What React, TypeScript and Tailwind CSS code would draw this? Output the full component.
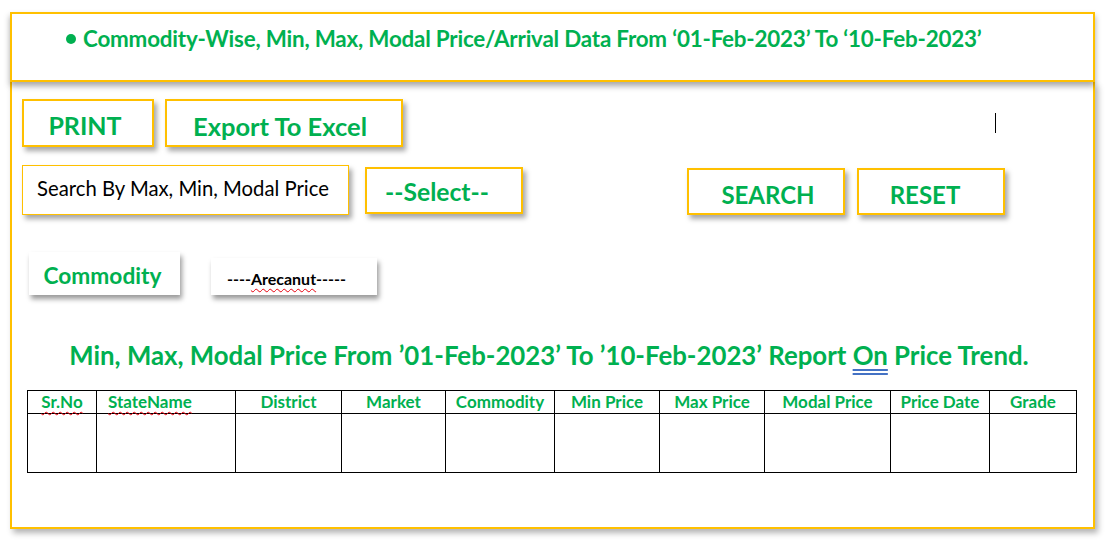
const columns = [
  { label: 'Sr.No', w: 'w-[68px]', squiggle: true },
  { label: 'StateName', w: 'w-[139px]', squiggle: true, left: true },
  { label: 'District', w: 'w-[106px]' },
  { label: 'Market', w: 'w-[104px]' },
  { label: 'Commodity', w: 'w-[109px]' },
  { label: 'Min Price', w: 'w-[105px]' },
  { label: 'Max Price', w: 'w-[105px]' },
  { label: 'Modal Price', w: 'w-[126px]' },
  { label: 'Price Date', w: 'w-[99px]' },
  { label: 'Grade', w: 'flex-1' },
]

const spell = 'underline decoration-wavy decoration-red-600 decoration-1 underline-offset-[3px]'

export default function App() {
  return (
    <div className="w-[1108px] h-[547px] bg-white pl-[10px] pt-[12px] font-['Lato',sans-serif]">
      <div className="flex flex-col w-[1085px] h-[517px]">
        {/* HEADER */}
        <div className="relative z-10 h-[70px] border-2 border-[#ffc000] bg-white shadow-[0_4px_6px_rgba(0,0,0,0.35)] pl-[54px] pt-[10px]">
          <p className="flex items-center gap-[7px] text-[22.4px] leading-[30px] font-bold text-[#00b050] tracking-[-0.2px]">
            <span className="w-[10px] h-[10px] rounded-full bg-[#00b050]" />
            Commodity-Wise, Min, Max, Modal Price/Arrival Data From ‘01-Feb-2023’ To ‘10-Feb-2023’
          </p>
        </div>

        {/* BODY */}
        <div className="flex-1 flex flex-col border-x-2 border-b-2 border-[#ffc000] shadow-[3px_4px_6px_rgba(0,0,0,0.3)] pl-[10px] pr-[15px]">
          <div className="flex items-center gap-[11px] mt-[17px]">
            <button className="w-[132px] h-[48px] border-2 border-[#ffc000] bg-white shadow-[3px_4px_5px_rgba(0,0,0,0.35)] text-[25px] font-bold text-[#00b050] pr-[6px] pt-[6px]">
              PRINT
            </button>
            <button className="w-[238px] h-[48px] border-2 border-[#ffc000] bg-white shadow-[3px_4px_5px_rgba(0,0,0,0.35)] text-[25.5px] font-bold text-[#00b050] pr-[8px] pt-[6px]">
              Export To Excel
            </button>
            <span className="ml-auto mr-[82px] w-px h-[20px] bg-black" />
          </div>

          <div className="flex items-start mt-[18px]">
            <div className="w-[327px] h-[50px] border border-[#ffc000] bg-white shadow-[3px_4px_5px_rgba(0,0,0,0.35)] pl-[14px] pb-[4px] flex items-center text-[20.3px] text-black">
              Search By Max, Min, Modal Price
            </div>
            <button className="mt-[2px] ml-[16px] w-[158px] h-[47px] border-2 border-[#ffc000] bg-white shadow-[3px_4px_5px_rgba(0,0,0,0.35)] text-[24.7px] font-bold text-[#00b050] pr-[14px] pt-[3px]">
              --Select--
            </button>
            <button className="mt-[3px] ml-[164px] w-[158px] h-[47px] border-2 border-[#ffc000] bg-white shadow-[3px_4px_5px_rgba(0,0,0,0.35)] text-[24px] font-bold text-[#00b050] pl-[4px] pt-[6px]">
              SEARCH
            </button>
            <button className="mt-[3px] ml-[12px] w-[148px] h-[47px] border-2 border-[#ffc000] bg-white shadow-[3px_4px_5px_rgba(0,0,0,0.35)] text-[24px] font-bold text-[#00b050] pr-[12px] pt-[6px]">
              RESET
            </button>
          </div>

          <div className="flex items-end mt-[37px] pl-[7px]">
            <div className="w-[151px] h-[43px] bg-white shadow-[2px_4px_5px_rgba(0,0,0,0.4)] flex items-center justify-center pr-[4px] pt-[6px] text-[22.7px] font-bold text-[#00b050]">
              Commodity
            </div>
            <div className="ml-[31px] w-[166px] h-[37px] bg-white shadow-[2px_4px_5px_rgba(0,0,0,0.4)] flex items-center pl-[16px] pt-[5px] text-[16px] font-bold text-black">
              ----<span className={spell}>Arecanut</span>-----
            </div>
          </div>

          <h2 className="mt-[44px] text-center text-[25.8px] font-bold text-[#00b050] leading-[32px] pr-[2px]">
            Min, Max, Modal Price From ’01-Feb-2023’ To ’10-Feb-2023’ Report{' '}
            <span className="underline decoration-double decoration-[#4472c4] underline-offset-[4px]">On</span> Price Trend.
          </h2>

          {/* TABLE */}
          <div className="mt-[19px] ml-[5px] w-[1050px] border border-black">
            <div className="flex h-[23px] border-b border-black">
              {columns.map((c, i) => (
                <div
                  key={c.label}
                  className={`${c.w} ${i > 0 ? 'border-l border-black' : ''} ${c.left ? 'justify-start pl-[11px]' : 'justify-center'} flex items-center text-[17px] leading-[20px] font-bold text-[#00b050]`}
                >
                  <span className={c.squiggle ? spell : ''}>{c.label}</span>
                </div>
              ))}
            </div>
            <div className="flex h-[58px]">
              {columns.map((c, i) => (
                <div key={c.label} className={`${c.w} ${i > 0 ? 'border-l border-black' : ''}`} />
              ))}
            </div>
          </div>
        </div>
      </div>
    </div>
  )
}
